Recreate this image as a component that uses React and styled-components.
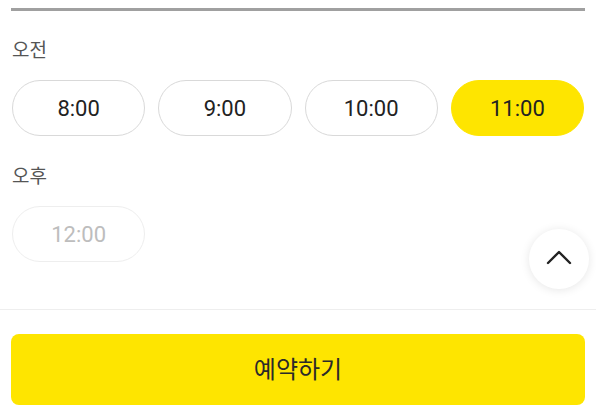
import { useState } from 'react'
import styled, { createGlobalStyle } from 'styled-components'

const morning = ["8:00", "9:00", "10:00", "11:00"]
const afternoon = [{ time: "12:00", disabled: true }]

export default function App() {
    const [selected, setSelected] = useState("11:00")

    return (
        <>
            <GlobalStyle />
            <Page>
                <TopRule />
                <Section>
                    <Label>오전</Label>
                    <PillRow>
                        {morning.map((t) => (
                            <Pill key={t} $active={selected === t} onClick={() => setSelected(t)}>
                                {t}
                            </Pill>
                        ))}
                    </PillRow>
                    <Label $gap={27}>오후</Label>
                    <PillRow>
                        {afternoon.map((a) => (
                            <Pill key={a.time} disabled={a.disabled}>{a.time}</Pill>
                        ))}
                    </PillRow>
                    <ScrollTop aria-label="맨 위로">
                        <svg width="26" height="16" viewBox="0 0 26 16" fill="none">
                            <path d="M2 14L13 3L24 14" stroke="#222" strokeWidth="2.4" strokeLinecap="round" strokeLinejoin="round" />
                        </svg>
                    </ScrollTop>
                </Section>
                <Footer>
                    <Submit>예약하기</Submit>
                </Footer>
            </Page>
        </>
    )
}

const GlobalStyle = createGlobalStyle`
    body {
        margin: 0;
        background: #fff;
        font-family: "Roboto", "Noto Sans CJK KR", sans-serif;
    }
`
const Page = styled.div`
    width: 596px;
    height: 420px;
    display: flex;
    flex-direction: column;
    overflow: hidden;
`
const TopRule = styled.div`
    margin: 8px 11px 0;
    height: 3px;
    background: #a0a0a0;
`
const Section = styled.div`
    position: relative;
    padding: 0 12px 0 12px;
    height: 298px;
    border-bottom: 1px solid #eeeeee;
`
const Label = styled.div`
    margin-top: ${(p) => p.$gap || 26}px;
    font-family: "Noto Sans CJK KR", sans-serif;
    font-size: 19px;
    line-height: 23px;
    color: #555;
`
const PillRow = styled.div`
    display: grid;
    grid-template-columns: repeat(4, 1fr);
    gap: 13px;
    margin-top: 20px;
`
const Pill = styled.button`
    height: 56px;
    border-radius: 28px;
    border: 1px solid ${(p) => (p.$active ? "#fee500" : p.disabled ? "#eeeeee" : "#d9d9d9")};
    background: ${(p) => (p.$active ? "#fee500" : "#fff")};
    color: ${(p) => (p.disabled ? "#bdbdbd" : "#222")};
    font-family: "Roboto", sans-serif;
    font-size: 22px;
    padding: 0;
    cursor: ${(p) => (p.disabled ? "default" : "pointer")};
`
const ScrollTop = styled.button`
    position: absolute;
    right: 7px;
    top: 218px;
    width: 60px;
    height: 60px;
    border-radius: 50%;
    border: none;
    background: #fff;
    box-shadow: 0 1px 10px rgba(0, 0, 0, 0.1);
    display: flex;
    align-items: center;
    justify-content: center;
    padding: 0 0 4px;
    cursor: pointer;
`
const Footer = styled.div`
    padding: 24px 11px 0;
`
const Submit = styled.button`
    width: 100%;
    height: 71px;
    border: none;
    border-radius: 8px;
    background: #fee500;
    color: #2a2a2a;
    font-family: "Noto Sans CJK KR", sans-serif;
    font-size: 24px;
    font-weight: 400;
    padding: 0 0 4px;
    cursor: pointer;
`
